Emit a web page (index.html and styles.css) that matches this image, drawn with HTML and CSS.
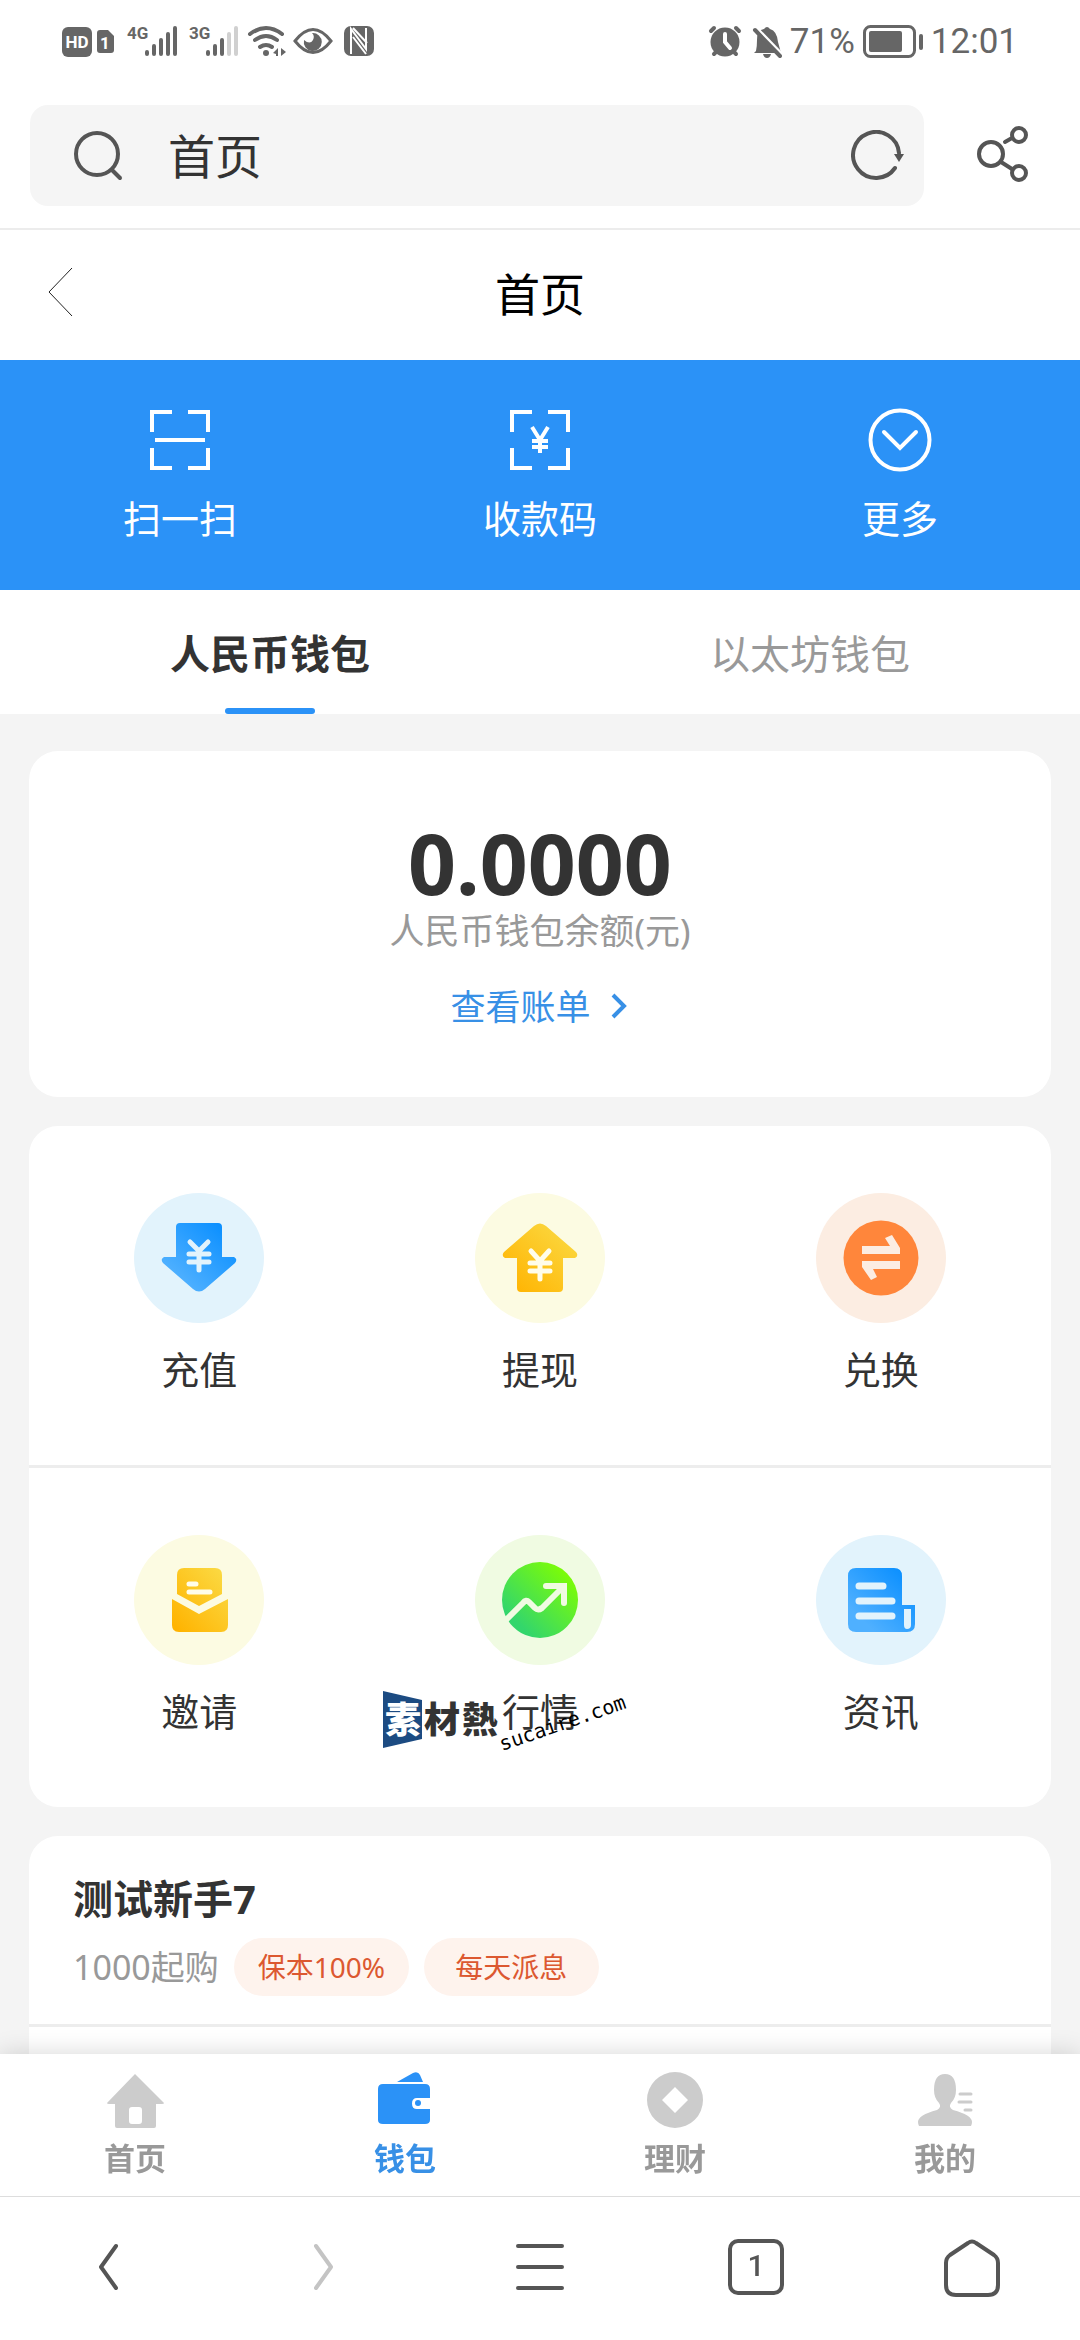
FILE: index.html
```html
<!DOCTYPE html>
<html lang="zh-CN">
<head>
<meta charset="utf-8">
<meta name="viewport" content="width=device-width, initial-scale=1">
<title>首页</title>
<link rel="stylesheet" href="styles.css">
</head>
<body>
<div class="app">
  <div class="status">
    <svg class="status-icons" width="336" height="40" viewBox="0 0 336 40" fill="#666">
      <!-- HD and SIM badges -->
      <rect x="2" y="6" width="30" height="30" rx="6"/>
      <text class="badge-text" x="17" y="27" text-anchor="middle">HD</text>
      <path d="M40 9H48L54 15V29Q54 32 51 32H40Q37 32 37 29V12Q37 9 40 9Z"/>
      <text class="badge-text" x="45" y="28" text-anchor="middle">1</text>
      <!-- signal bars -->
      <text class="net-text" x="67" y="18">4G</text>
      <g stroke="#666" stroke-width="4" stroke-linecap="round"><path d="M87 31V33M94 25V33M101 19V33M108 13V33M115 7V33"/></g>
      <text class="net-text" x="129" y="18">3G</text>
      <g stroke="#666" stroke-width="4" stroke-linecap="round"><path d="M148 31V33M155 25V33M162 19V33"/><path stroke="#d0d0d0" d="M169 13V33M176 7V33"/></g>
      <!-- wifi -->
      <g fill="none" stroke="#666" stroke-width="4" stroke-linecap="round"><path d="M190 13Q206 1 222 13M195 19Q206 11 217 19M200 26Q206 22 212 26"/></g>
      <circle cx="206" cy="32" r="3"/><path d="M218 27V35H216V33L213 32ZM221 27V35L226 31Z"/>
      <!-- eye -->
      <path d="M235 20Q253 -3 271 20Q253 43 235 20Z" fill="none" stroke="#666" stroke-width="3"/>
      <path d="M252 12A9 9 0 1 1 244 19Q250 24 253 19Q255 15 252 12Z"/>
      <!-- nfc -->
      <rect x="284" y="5" width="30" height="30" rx="7"/>
      <path d="M291 33V8L306 28V7M293 7L307 22M306 33L293 16" fill="none" stroke="#fff" stroke-width="2"/>
    </svg>
    <div class="status-right">
      <svg width="74" height="36" viewBox="0 0 74 36" fill="#666">
        <circle cx="17" cy="19" r="14.500"/><g stroke="#666" stroke-width="4" stroke-linecap="round"><path d="M3 8L6 5M31 8L28 5M6 31L9 28M28 31L25 28"/></g>
        <path d="M17 11V19L22 25" fill="none" stroke="#fff" stroke-width="4" stroke-linecap="round"/>
        <path d="M48 28Q49 24 49 17Q49 7 56 6Q59 2 62 6Q69 8 70 19L73 30H46Z"/><path d="M55 31H63Q62 35 59 35Q56 35 55 31Z"/>
        <path d="M47 4L75 33" stroke="#fff" stroke-width="4"/><path d="M47 7L72 33" stroke="#666" stroke-width="4" stroke-linecap="round"/>
      </svg>
      <span class="battery-text">71%</span>
      <svg width="60" height="36" viewBox="0 0 60 36"><rect x="1.500" y="3.500" width="50" height="30" rx="6" fill="none" stroke="#666" stroke-width="3"/><rect x="6" y="8" width="33" height="21" rx="2" fill="#666"/><rect x="56" y="11" width="4" height="16" rx="2" fill="#666"/></svg>
      <span class="clock">12:01</span>
    </div>
  </div>

  <header class="toolbar">
    <div class="search">
      <label for="address" aria-label="搜索">
        <svg width="52" height="52" viewBox="0 2 52 52" fill="none" stroke="#555" stroke-width="4" stroke-linecap="round"><circle cx="25" cy="26" r="21"/><path d="M40 42L48 50"/></svg>
      </label>
      <input id="address" class="address" type="text" value="首页">
      <button class="icon-button" type="button" aria-label="刷新">
        <svg width="54" height="52" viewBox="0 0 54 52" fill="none" stroke="#555" stroke-width="4" stroke-linecap="round"><path d="M44 38A23 23 0 1 1 48 23"/><path d="M43 24H53L48 32Z" fill="#555" stroke="none"/></svg>
      </button>
    </div>
    <button class="icon-button share" type="button" aria-label="分享">
      <svg width="54" height="60" viewBox="0 2 54 60" fill="none" stroke="#555" stroke-width="4" stroke-linecap="round"><circle cx="15" cy="30" r="12"/><circle cx="43" cy="11" r="7"/><circle cx="43" cy="49" r="7"/><path d="M25 38L36 45M29 18L36 14"/></svg>
    </button>
  </header>

  <div class="titlebar">
    <button class="icon-button back" type="button" aria-label="返回"><svg width="26" height="50" viewBox="0 0 26 50" fill="none" stroke="#222" stroke-width="1"><path d="M24 1L1 25L24 49"/></svg></button>
    <h1>首页</h1>
  </div>

  <main class="content">
    <nav class="hero">
      <a href="#scan"><svg width="66" height="66" viewBox="0 0 66 66" fill="none" stroke="#fff" stroke-width="4"><path d="M25 5H5V25M41 5H61V25M5 41V61H25M61 41V61H41M8 33H58"/></svg>扫一扫</a>
      <a href="#code"><svg width="66" height="66" viewBox="0 0 66 66" fill="none" stroke="#fff" stroke-width="4"><path d="M25 5H5V25M41 5H61V25M5 41V61H25M61 41V61H41"/><path d="M25 20L33 33L41 20M33 33V46M25 34H41M25 40H41"/></svg>收款码</a>
      <a href="#more"><svg width="66" height="66" viewBox="0 0 66 66" fill="none" stroke="#fff" stroke-width="4" stroke-linecap="round"><circle cx="33" cy="33" r="29.500"/><path d="M17 25L33 41L49 25"/></svg>更多</a>
    </nav>

    <div class="tabs" role="tablist">
      <button class="tab active" type="button" role="tab" aria-selected="true">人民币钱包</button>
      <button class="tab" type="button" role="tab" aria-selected="false">以太坊钱包</button>
    </div>

    <div class="cards">
      <section class="card balance">
        <strong class="amount">0.0000</strong>
        <span class="caption">人民币钱包余额(元)</span>
        <a class="bill" href="#bill">查看账单<svg width="20" height="28" viewBox="0 0 20 28" fill="none" stroke="#3890e6" stroke-width="4"><path d="M3 2L14 13L3 24"/></svg></a>
      </section>

      <section class="card actions">
        <div class="row">
          <a href="#deposit"><svg width="130" height="130" viewBox="0 0 130 130">
            <defs>
              <linearGradient id="blue" x1="0" y1="1" x2="1" y2="0"><stop offset="0.200" stop-color="#4fb0ff"/><stop offset="0.900" stop-color="#0a8fff"/></linearGradient>
              <linearGradient id="gold" x1="0" y1="1" x2="1" y2="0"><stop offset="0.050" stop-color="#ffb300"/><stop offset="0.900" stop-color="#fbd840"/></linearGradient>
              <linearGradient id="green" x1="0" y1="1" x2="1" y2="0"><stop offset="0.200" stop-color="#33d66c"/><stop offset="0.850" stop-color="#7bfc08"/></linearGradient>
            </defs>
            <circle cx="65" cy="65" r="65" fill="#e2f3fc"/>
            <path fill="url(#blue)" d="M46 30H84Q88 30 88 34V64H100Q104 66 101 70L71 96Q65 101 59 96L29 70Q26 66 30 64H42V34Q42 30 46 30Z"/>
            <path fill="none" stroke="#e2f3fc" stroke-width="5" stroke-linecap="round" d="M56 49L65 58L74 49M65 58V77M55 61H75M55 69H75"/></svg>充值</a>
          <a href="#withdraw"><svg width="130" height="130" viewBox="0 0 130 130">
            <circle cx="65" cy="65" r="65" fill="#fcfbe2"/>
            <path fill="url(#gold)" d="M59 33Q65 28 71 33L101 59Q104 63 100 65H88V95Q88 99 84 99H46Q42 99 42 95V65H30Q26 63 29 59Z"/>
            <path fill="none" stroke="#fffdea" stroke-width="5" stroke-linecap="round" d="M56 58L65 68L74 58M65 68V86M55 70H75M55 78H75"/></svg>提现</a>
          <a href="#exchange"><svg width="130" height="130" viewBox="0 0 130 130">
            <circle cx="65" cy="65" r="65" fill="#fcede2"/><circle cx="65" cy="65" r="37.500" fill="#ff863b"/>
            <path fill="#fcede2" d="M46 53H74L69 45L76 42L84 55V61H46ZM84 76H57L61 84L55 87L46 74V68H84Z"/></svg>兑换</a>
        </div>
        <div class="row">
          <a href="#invite"><svg width="130" height="130" viewBox="0 0 130 130">
            <circle cx="65" cy="65" r="65" fill="#fcfbe2"/>
            <path fill="url(#gold)" d="M50 33H81Q88 33 88 40V59L65 71L43 59V40Q43 33 50 33ZM38 64L65 79L94 64V90Q94 97 87 97H45Q38 97 38 90Z"/>
            <path fill="none" stroke="#fffdea" stroke-width="5" stroke-linecap="round" d="M55 49H62M55 57H76"/></svg>邀请</a>
          <a href="#market"><svg width="130" height="130" viewBox="0 0 130 130">
            <circle cx="65" cy="65" r="65" fill="#f0fbe2"/><circle cx="65" cy="65" r="38" fill="url(#green)"/>
            <path fill="none" stroke="#f0fbe2" stroke-width="6" stroke-linejoin="round" d="M31 85L48 68Q51 64 54 67L60 73Q63 76 67 73L89 51"/>
            <path fill="none" stroke="#f0fbe2" stroke-width="6" stroke-linecap="round" d="M71 51H89V68"/></svg>行情
            <svg class="watermark" width="260" height="80" viewBox="0 0 260 80">
              <path d="M3 6L42 15V54L3 63Z" fill="#1c4b82"/>
              <text class="mark-cjk" x="5" y="48" fill="#fff">素</text>
              <text class="mark-cjk" x="44" y="48" fill="#333">材</text>
              <text class="mark-cjk" x="82" y="48" fill="#333">熱</text>
              <text class="mark-url" transform="translate(122 66) rotate(-19)">sucaire.com</text>
            </svg></a>
          <a href="#news"><svg width="130" height="130" viewBox="0 0 130 130">
            <circle cx="65" cy="65" r="65" fill="#e2f3fc"/>
            <path fill="url(#blue)" d="M40 33H78Q86 33 86 41V70H99V89Q99 97 91 97H40Q32 97 32 89V41Q32 33 40 33Z"/>
            <path fill="#e2f3fc" d="M88 74H95V90Q95 94 91 94Q88 94 88 90Z"/>
            <path stroke="#e2f3fc" stroke-width="7" stroke-linecap="round" d="M43 51H67M43 66H76M43 81H76"/></svg>资讯</a>
        </div>
      </section>

      <section class="card product">
        <div class="product-head">
          <h2>测试新手7</h2>
          <div class="meta"><span class="minimum">1000起购</span><span class="pill">保本100%</span><span class="pill">每天派息</span></div>
        </div>
        <div class="product-body"></div>
      </section>
    </div>
  </main>

  <nav class="tabbar">
    <a href="#home"><svg width="60" height="60" viewBox="0 0 60 60" fill="#ccc"><path fill-rule="evenodd" d="M30 4L59 33Q59 34 57 34H51V56Q51 58 49 58H12Q10 58 10 56V34H4Q2 34 2 33ZM27 37Q24 37 24 40V51Q24 54 27 54H34Q37 54 37 51V40Q37 37 34 37Z"/></svg>首页</a>
    <a class="current" href="#wallet"><svg width="60" height="60" viewBox="0 0 60 60" fill="#2b92f7"><path d="M22 12L38 3Q43 1 45 5L48 12ZM8 14H50Q55 14 55 19V28H42Q37 28 37 33.500Q37 39 42 39H55V50Q55 54 50 54H8Q3 54 3 50V19Q3 14 8 14Z"/><circle cx="43" cy="33" r="3"/></svg>钱包</a>
    <a href="#finance"><svg width="60" height="60" viewBox="0 0 60 60" fill="#ccc"><path fill-rule="evenodd" d="M30 2A28 28 0 1 1 30 58A28 28 0 1 1 30 2ZM30 17L17 30L30 43L43 30Z"/></svg>理财</a>
    <a href="#mine"><svg width="60" height="60" viewBox="0 0 60 60" fill="#ccc"><path d="M30 4Q41 4 41 20Q41 28 36 33Q33 37 38 40Q57 45 57 52Q57 54 56 56H4Q3 54 3 52Q3 45 22 40Q27 37 24 33Q19 28 19 20Q19 4 30 4Z"/><path d="M45 24H56M44 32H56M50 40H56" stroke="#ccc" stroke-width="3" stroke-linecap="round"/></svg>我的</a>
  </nav>

  <nav class="browserbar">
    <button type="button" aria-label="后退"><svg width="60" height="60" viewBox="0 0 60 60"><path d="M38 9L23 30L38 51"/></svg></button>
    <button class="disabled" type="button" aria-label="前进" disabled><svg width="60" height="60" viewBox="0 0 60 60"><path d="M22 9L37 30L22 51"/></svg></button>
    <button type="button" aria-label="菜单"><svg width="60" height="60" viewBox="0 0 60 60"><path d="M8 9H52M8 30H52M8 51H52"/></svg></button>
    <button type="button" aria-label="标签页"><span class="tab-count">1</span></button>
    <button type="button" aria-label="主页"><svg width="60" height="60" viewBox="0 0 60 60"><path d="M26 6Q30 3 34 6L52 18Q56 21 56 26V48Q56 58 46 58H14Q4 58 4 48V26Q4 21 8 18Z"/></svg></button>
  </nav>
</div>
</body>
</html>
```
FILE: styles.css
```css
* {
  box-sizing: border-box;
}

body {
  margin: 0;
  background: #fff;
  color: #333;
  font-family: "Noto Sans", "Noto Sans CJK SC", sans-serif;
}

a {
  color: inherit;
  text-decoration: none;
}

button {
  padding: 0;
  border: 0;
  background: none;
  color: inherit;
  font: inherit;
}

svg {
  display: block;
  flex: none;
}

h1,
h2 {
  margin: 0;
}

.app {
  display: flex;
  flex-direction: column;
  height: 100vh;
}

/* Status bar */
.status {
  display: flex;
  flex: none;
  align-items: center;
  justify-content: space-between;
  height: 82px;
  padding: 0 62px 0 60px;
}

.status-right {
  display: flex;
  align-items: center;
  gap: 8px;
  color: #666;
  font-family: Roboto, sans-serif;
  font-size: 35px;
  line-height: 40px;
}

.battery-text,
.clock {
  padding-top: 2px;
}

.badge-text {
  fill: #fff;
  font: bold 17px Roboto, sans-serif;
}

.net-text {
  font: bold 17px "Liberation Sans Narrow", Roboto, sans-serif;
}

/* Browser toolbar */
.toolbar {
  display: flex;
  flex: none;
  align-items: center;
  gap: 52px;
  padding: 23px 50px 22px 30px;
  border-bottom: 2px solid #ececec;
}

.search {
  display: flex;
  flex: 1;
  align-items: center;
  height: 101px;
  padding: 0 19px 0 42px;
  border-radius: 18px;
  background: #f5f5f5;
}

.address {
  flex: 1;
  min-width: 0;
  margin-left: 44px;
  padding: 0;
  border: 0;
  outline: 0;
  background: none;
  color: #333;
  font: 47px/60px "Noto Sans", "Noto Sans CJK SC", sans-serif;
}

/* Page title */
.titlebar {
  display: grid;
  flex: none;
  grid-template-columns: 1fr auto 1fr;
  align-items: center;
  height: 130px;
  padding: 0 48px;
}

.titlebar h1 {
  color: #000;
  font-size: 45px;
  font-weight: 400;
  line-height: 60px;
}

.back {
  padding-bottom: 6px;
}

.content {
  flex: 1;
  min-height: 0;
  overflow-y: auto;
  background: #f4f4f4;
  scrollbar-width: none;
}

/* Shortcuts */
.hero {
  display: grid;
  grid-template-columns: repeat(3, 1fr);
  padding: 47px 0 48px;
  background: #2b92f7;
}

.hero a {
  display: flex;
  flex-direction: column;
  align-items: center;
  gap: 21px;
  color: #fff;
  font-size: 38px;
  line-height: 48px;
}

/* Wallet tabs */
.tabs {
  display: grid;
  grid-template-columns: 1fr 1fr;
  background: #fff;
}

.tab {
  position: relative;
  height: 124px;
  color: #999;
  font-size: 40px;
}

.tab.active {
  color: #333;
  font-weight: 700;
}

.tab.active::after {
  position: absolute;
  bottom: 0;
  left: 50%;
  width: 90px;
  height: 6px;
  margin-left: -45px;
  border-radius: 3px;
  background: #2b92f7;
  content: "";
}

/* Cards */
.cards {
  display: flex;
  flex-direction: column;
  gap: 29px;
  padding: 37px 29px;
}

.card {
  border-radius: 29px;
  background: #fff;
}

.balance {
  display: flex;
  flex-direction: column;
  align-items: center;
  padding: 70px 0 66px;
  font-size: 35px;
  line-height: 48px;
}

.amount {
  font-size: 84px;
  line-height: 84px;
}

.caption {
  margin-top: 2px;
  color: #999;
}

.bill {
  display: flex;
  align-items: center;
  gap: 19px;
  margin-top: 28px;
  color: #3890e6;
}

.row {
  display: grid;
  grid-template-columns: repeat(3, 1fr);
}

.row + .row {
  border-top: 3px solid #ededed;
}

.row a {
  position: relative;
  display: flex;
  flex-direction: column;
  align-items: center;
  gap: 22px;
  padding: 67px 0 72px;
  font-size: 38px;
  line-height: 48px;
}

.watermark {
  position: absolute;
  top: 217px;
  left: calc(50% - 160px);
}

.mark-cjk {
  font: 900 36px "Noto Sans CJK TC", sans-serif;
}

.mark-url {
  fill: #000;
  font: 20px "DejaVu Sans Mono", monospace;
}

.product-head {
  padding: 37px 44px 28px;
  border-bottom: 3px solid #ededed;
}

.product h2 {
  font-size: 40px;
  line-height: 52px;
}

.meta {
  display: flex;
  align-items: center;
  gap: 15px;
  margin-top: 13px;
}

.minimum {
  color: #999;
  font-size: 34px;
  line-height: 58px;
}

.pill {
  min-width: 175px;
  border-radius: 29px;
  background: #fef3ed;
  color: #dc5830;
  font-size: 28px;
  line-height: 58px;
  text-align: center;
}

.product-body {
  min-height: 140px;
}

/* Page navigation */
.tabbar {
  position: relative;
  display: grid;
  flex: none;
  grid-template-columns: repeat(4, 1fr);
  padding: 16px 0 18px;
  background: #fff;
  box-shadow: 0 0 24px rgba(0, 0, 0, 0.16);
}

.tabbar a {
  display: flex;
  flex-direction: column;
  align-items: center;
  gap: 8px;
  color: #999;
  font-size: 31px;
  font-weight: 700;
  line-height: 40px;
}

.tabbar .current {
  color: #3890e6;
}

/* Browser controls */
.browserbar {
  position: relative;
  display: grid;
  flex: none;
  grid-template-columns: repeat(5, 1fr);
  height: 144px;
  padding-bottom: 3px;
  border-top: 1px solid #ddd;
  background: #fff;
}

.browserbar button {
  display: flex;
  align-items: center;
  justify-content: center;
}

.browserbar svg {
  fill: none;
  stroke: #555;
  stroke-linecap: round;
  stroke-linejoin: round;
  stroke-width: 4px;
}

.browserbar .disabled svg {
  stroke: #c4c4c4;
}

.tab-count {
  width: 56px;
  height: 56px;
  border: 4px solid #555;
  border-radius: 10px;
  color: #555;
  font: 500 30px/46px Roboto, sans-serif;
  text-align: center;
}
```
